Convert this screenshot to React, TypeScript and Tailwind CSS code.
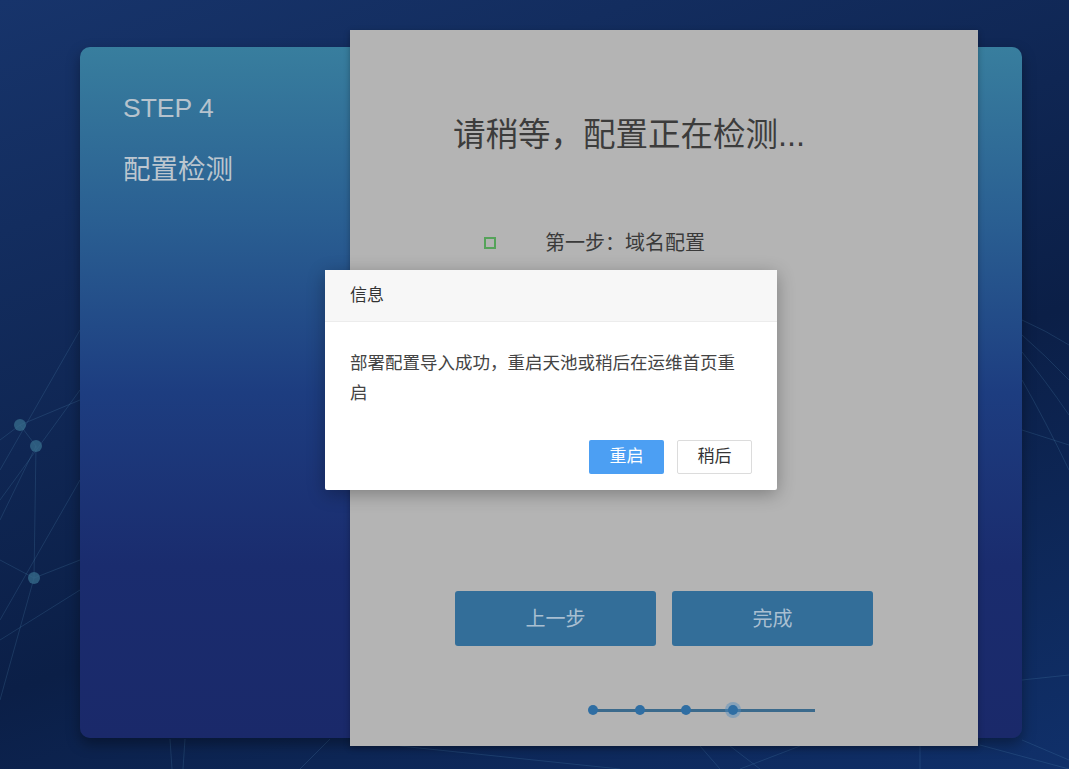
import React from "react";

const FONT = { fontFamily: '"Liberation Sans", "Noto Sans CJK SC", sans-serif' };

function NetworkLines() {
  return (
    <svg className="absolute inset-0 pointer-events-none" width="1069" height="769" viewBox="0 0 1069 769">
      <g stroke="rgba(90,150,190,0.2)" strokeWidth="1" fill="none">
        <path d="M0 470 L80 330" />
        <path d="M0 500 L80 390" />
        <path d="M0 440 L20 425 L80 400" />
        <path d="M20 425 L36 446 L34 578" />
        <path d="M0 520 L36 446" />
        <path d="M0 620 L80 480" />
        <path d="M34 578 L80 560" />
        <path d="M34 578 L0 560" />
        <path d="M0 640 L80 590" />
        <path d="M0 700 L34 578" />
        <path d="M1022 320 Q1045 330 1069 345" />
        <path d="M1022 335 Q1045 355 1069 380" />
        <path d="M1022 352 Q1045 380 1069 415" />
        <path d="M1022 380 Q1045 420 1069 470" />
        <path d="M1022 430 L1069 445" />
        <path d="M1022 680 L1069 675" />
        <path d="M1022 740 L1069 760" />
        <path d="M170 739 L172 769" />
        <path d="M185 739 L183 769" />
        <path d="M300 769 L330 739" />
        <path d="M400 746 L620 769" />
        <path d="M700 746 L720 769" />
        <path d="M730 746 L760 769" />
        <path d="M740 769 L800 746" />
        <path d="M920 746 L920 769" />
        <path d="M980 745 L1069 769" />
      </g>
      <g fill="rgba(55,110,140,0.75)">
        <circle cx="20" cy="425" r="6" />
        <circle cx="36" cy="446" r="6" />
        <circle cx="34" cy="578" r="6" />
      </g>
    </svg>
  );
}

export default function App() {
  return (
    <div
      className="relative w-[1069px] h-[769px] overflow-hidden bg-[linear-gradient(160deg,#17346b_0%,#0f2653_40%,#0b1f47_60%,#10306a_100%)]"
      style={FONT}
    >
      <NetworkLines />
      <div className="relative flex pt-[47px] pl-[80px] pr-[47px]">
        <div className="flex w-[942px] h-[691px] rounded-[10px] bg-[linear-gradient(180deg,#387e9e_0%,#2a5f92_25%,#1d3d80_50%,#1a2c6e_75%,#1a296a_100%)] shadow-[0_6px_14px_rgba(0,0,0,0.35)]">
          <div className="w-[270px] shrink-0 pt-[45px] pl-[43px]">
            <div className="text-[26.5px] leading-[32px] text-[#b7c3cd]">STEP 4</div>
            <div className="mt-[29px] text-[27.5px] leading-[34px] text-[#bcc6cf]">配置检测</div>
          </div>
          <div className="w-[628px] shrink-0 -mt-[17px] h-[716px] bg-[#b4b4b4] shadow-[0_2px_6px_rgba(0,0,0,0.3)] flex flex-col pt-[85px]">
            <div className="pl-[103px] text-[32.5px] leading-[40px] text-[#3c3c3c]">请稍等，配置正在检测...</div>
            <div className="mt-[74px] flex items-center pl-[134px] h-[28px]">
              <div className="w-[12px] h-[12px] border-2 border-[#55a35a]" />
              <div className="ml-[49px] text-[20px] leading-[28px] text-[#3a3a3a]">第一步：域名配置</div>
            </div>
            <div className="mt-[334px] flex justify-center gap-[16px]">
              <div className="w-[201px] h-[55px] rounded-[3px] bg-[#336e99] flex items-center justify-center text-[20px] text-[#a9bfd1]">上一步</div>
              <div className="w-[201px] h-[55px] rounded-[3px] bg-[#336e99] flex items-center justify-center text-[20px] text-[#a9bfd1]">完成</div>
            </div>
            <div className="mt-[59px] relative h-[10px] ml-[238px] w-[230px]">
              <div className="absolute left-[5px] top-[4px] w-[222px] h-[2.5px] bg-[#3b6a8c]" />
              <div className="absolute left-0 top-0 w-[10px] h-[10px] rounded-full bg-[#2f6ea3]" />
              <div className="absolute left-[47px] top-0 w-[10px] h-[10px] rounded-full bg-[#2f6ea3]" />
              <div className="absolute left-[93px] top-0 w-[10px] h-[10px] rounded-full bg-[#2f6ea3]" />
              <div className="absolute left-[140px] top-0 w-[10px] h-[10px] rounded-full bg-[#2f6ea3] shadow-[0_0_0_3px_rgba(80,140,190,0.45)]" />
            </div>
          </div>
        </div>
      </div>

      <div className="absolute left-[325px] top-[270px] w-[452px] h-[220px] bg-white rounded-[2px] shadow-[0_4px_18px_rgba(0,0,0,0.3)] flex flex-col">
        <div className="h-[52px] bg-[#f7f7f7] border-b border-[#ececec] flex items-center px-[25px] text-[17px] text-[#333]">信息</div>
        <div className="px-[25px] pt-[26px] text-[17.5px] leading-[30px] text-[#444]">部署配置导入成功，重启天池或稍后在运维首页重启</div>
        <div className="mt-auto mb-[16px] flex justify-end gap-[13px] px-[25px]">
          <div className="w-[75px] h-[34px] rounded-[2px] bg-[#4c9ff3] text-white text-[17px] flex items-center justify-center">重启</div>
          <div className="w-[75px] h-[34px] rounded-[2px] bg-white border border-[#dcdcdc] text-[#333] text-[17px] flex items-center justify-center">稍后</div>
        </div>
      </div>
    </div>
  );
}
